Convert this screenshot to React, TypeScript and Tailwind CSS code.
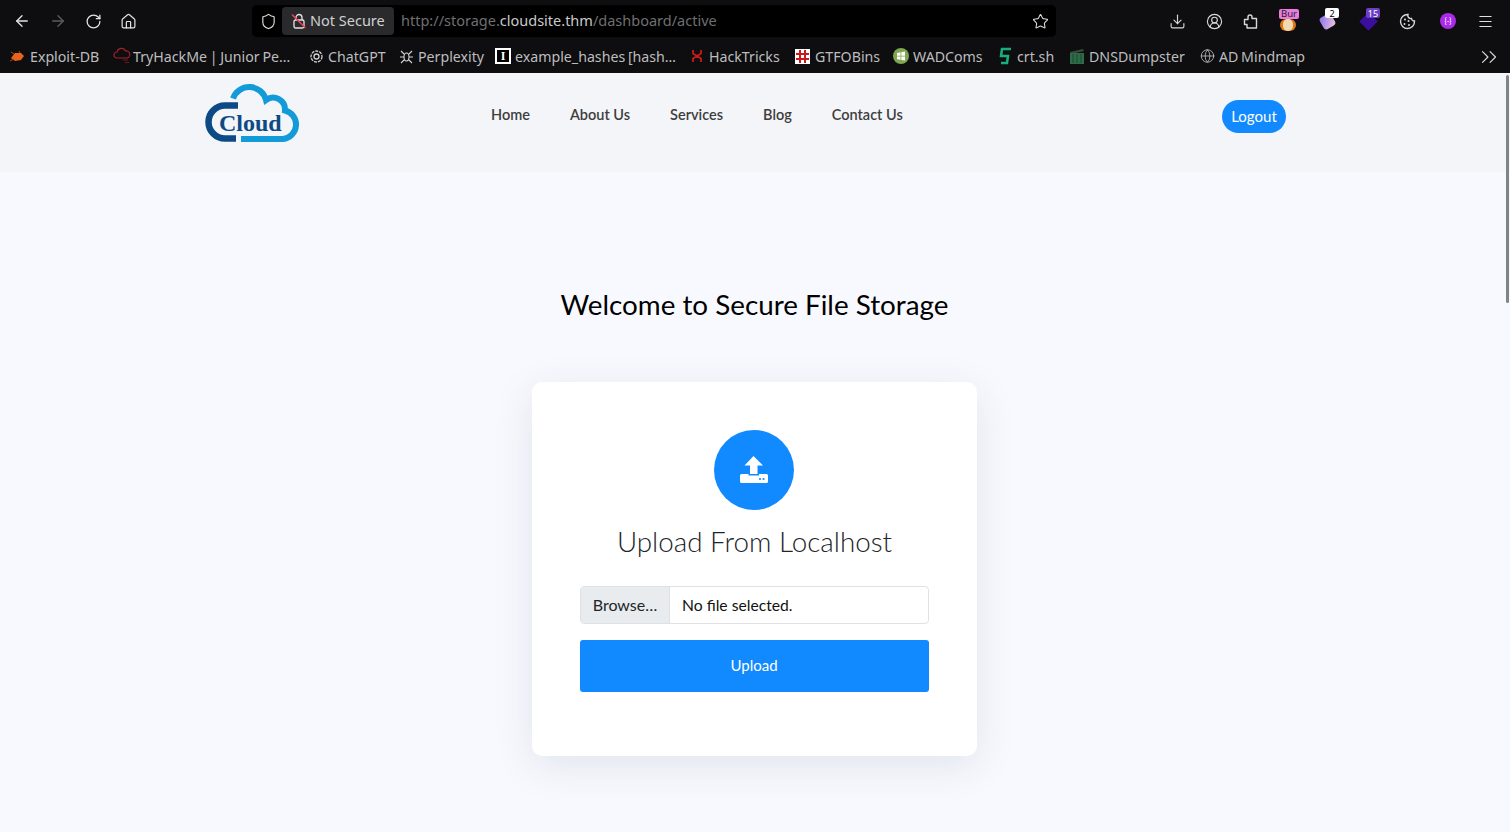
import {
  ArrowLeft,
  ArrowRight,
  ChevronsRight,
  CircleUserRound,
  Download,
  Globe,
  House,
  Menu,
  RotateCw,
  Shield,
  Star,
} from "lucide-react";

const links = ["Home", "About Us", "Services", "Blog", "Contact Us"];

const LockOff = () => (
  <svg width="16" height="16" viewBox="0 0 16 16" fill="none" stroke="#e5e5e5" strokeWidth="1.3">
    <path d="M5 7V4.500a3 3 0 0 1 6 0V7" />
    <rect x="3" y="7" width="10" height="8" rx="1.500" />
    <path d="M1 1.500 14.500 15" stroke="#f0405a" strokeWidth="1.500" />
  </svg>
);

const Bug = () => (
  <svg width="15" height="12" viewBox="0 0 15 12">
    <path d="M1 8 5 3l6 0 3 3-3 4-6 1z" fill="#e8641c" />
    <path d="M1 2l3 2M0 11l4-2M9 1l1 2" stroke="#a8481a" />
  </svg>
);

const CloudRed = () => (
  <svg width="18" height="18" viewBox="0 0 18 18" fill="none" stroke="#a3202a" strokeWidth="1.2">
    <path d="M4 11a3 3 0 0 1 0-6 4.500 4.500 0 0 1 8.500-1A3.500 3.500 0 0 1 14 11z" />
    <path d="M10 13h5M12 15.500h4" stroke="#6b1b20" />
  </svg>
);

const OpenAi = () => (
  <svg width="15" height="15" viewBox="0 0 15 15" fill="none" stroke="#d0d0d0" strokeWidth="1.300">
    <circle cx="7.500" cy="7.500" r="5.500" strokeDasharray="3 1" />
    <circle cx="7.500" cy="7.500" r="2.500" />
  </svg>
);

const Spider = () => (
  <svg width="15" height="15" viewBox="0 0 15 15" fill="none" stroke="#d4d4d4" strokeWidth="1.100">
    <ellipse cx="7.500" cy="8" rx="2.500" ry="4" />
    <path d="M5 5 2 2M10 5l3-3M5 8H1M10 8h4M5 11l-3 3M10 11l3 3" />
  </svg>
);

const Hashes = () => (
  <div className="flex h-[16px] w-[16px] items-center justify-center border-2 border-white bg-black font-['Liberation_Serif',serif] text-[12px] font-bold leading-none text-white">
    I
  </div>
);

const HackTricksIcon = () => (
  <svg width="14" height="14" viewBox="0 0 14 14" fill="none" stroke="#c81a1a" strokeWidth="1.800">
    <path d="M3 1v3.500l4 2.500 4-2.500V1M3 13V9.500L7 7l4 2.500V13" />
  </svg>
);

const GtfoBins = () => (
  <svg width="15" height="15" viewBox="0 0 15 15">
    <rect width="15" height="15" fill="#fff" />
    <path d="M5 1v13M10 1v13M1 5h13M1 10h13" stroke="#c81a1a" strokeWidth="2" />
  </svg>
);

const WadComs = () => (
  <svg width="16" height="16" viewBox="0 0 16 16">
    <circle cx="8" cy="8" r="8" fill="#7fa650" />
    <path d="M4 5l3.500-.7v3.400H4zM8.300 4.200 12 3.500v4.200H8.300zM4 8.500h3.500v3.300L4 11.200zM8.300 8.500H12v4l-3.700-.6z" fill="#fff" />
  </svg>
);

const CrtSh = () => (
  <svg width="14" height="18" viewBox="0 0 14 18" fill="none" stroke="#17b07c" strokeWidth="2.500">
    <path d="M13 2H4L3 9h7l-1 7H3" />
  </svg>
);

const Dumpster = () => (
  <svg width="16" height="16" viewBox="0 0 16 16">
    <path d="M1 4 14 1l1 2L2 6z" fill="#3a4a3c" />
    <rect x="1" y="5" width="14" height="11" fill="#2f6b48" />
    <path d="M4 6v9M8 6v9M12 6v9" stroke="#1f4a32" />
  </svg>
);

const PuzzleIcon = () => (
  <svg width="16" height="16" viewBox="0 0 16 16" fill="none" stroke="#d8d8d8" strokeWidth="1.400" strokeLinejoin="round">
    <path d="M1.500 6.500H5V4a2 2 0 0 1 4 0v1.500h4.500V15H4v-3.500H1.500z" />
  </svg>
);

const CookieIcon = () => (
  <svg width="17" height="17" viewBox="0 0 17 17" fill="none" stroke="#d8d8d8" strokeWidth="1.400">
    <path d="M9 1.500a7 7 0 1 0 6.500 6.500 3 3 0 0 1-3-2.500 3 3 0 0 1-3.500-4z" />
    <circle cx="6" cy="6.500" r="1" fill="#d8d8d8" stroke="none" />
    <circle cx="5.500" cy="11" r="1" fill="#d8d8d8" stroke="none" />
    <circle cx="10" cy="12" r="1" fill="#d8d8d8" stroke="none" />
    <circle cx="9.500" cy="8" r="1" fill="#d8d8d8" stroke="none" />
  </svg>
);

const bookmarks = [
  { name: "Exploit-DB", icon: <Bug />, iconBox: "w-[15px]", width: "w-[113px]", pl: "pl-[10px]", gap: "gap-[5px]" },
  { name: "TryHackMe | Junior Pe...", icon: <CloudRed />, iconBox: "w-[18px]", width: "w-[196px]", pl: "", gap: "gap-[2px]" },
  { name: "ChatGPT", icon: <OpenAi />, iconBox: "w-[15px]", width: "w-[90px]", pl: "", gap: "gap-[4px]" },
  { name: "Perplexity", icon: <Spider />, iconBox: "w-[15px]", width: "w-[96px]", pl: "", gap: "gap-[4px]" },
  { name: "example_hashes [hash...", icon: <Hashes />, iconBox: "w-[16px]", width: "w-[195px]", pl: "", gap: "gap-[4px]" },
  { name: "HackTricks", icon: <HackTricksIcon />, iconBox: "w-[14px]", width: "w-[105px]", pl: "", gap: "gap-[5px]" },
  { name: "GTFOBins", icon: <GtfoBins />, iconBox: "w-[15px]", width: "w-[98px]", pl: "", gap: "gap-[5px]" },
  { name: "WADComs", icon: <WadComs />, iconBox: "w-[16px]", width: "w-[105px]", pl: "", gap: "gap-[4px]" },
  { name: "crt.sh", icon: <CrtSh />, iconBox: "w-[14px]", width: "w-[71px]", pl: "", gap: "gap-[5px]" },
  { name: "DNSDumpster", icon: <Dumpster />, iconBox: "w-[16px]", width: "w-[131px]", pl: "", gap: "gap-[4px]" },
  { name: "AD Mindmap", icon: <Globe size={18} strokeWidth={1.200} color="#d0d0d0" />, iconBox: "w-[15px]", width: "w-[110px]", pl: "", gap: "gap-[4px]" },
];

const Badge = ({ text, className }: { text: string; className: string }) => (
  <div className={`absolute flex items-center justify-center rounded-[2px] font-['Noto_Sans',sans-serif] leading-none ${className}`}>
    {text}
  </div>
);

const Extensions = () => (
  <div className="ml-[21px] flex items-center">
    <div className="relative h-[12px] w-[16px] translate-y-[4px] rounded-full bg-[#d9761c]">
      <div className="mx-auto h-[12px] w-[10px] rounded-full bg-[#f3d9b0]" />
      <Badge text="Bur" className="left-[-1px] top-[-10px] h-[10px] w-[20px] bg-[#e87ce0] text-[9.500px] text-[#222]" />
    </div>
    <div className="relative ml-[23px] h-[16px] w-[16px]">
      <div className="mx-auto h-[13px] w-[13px] translate-y-[2px] rotate-[-30deg] rounded-[3px] bg-gradient-to-br from-[#8a6cf0] to-[#f3c6d8]" />
      <Badge text="2" className="left-[6px] top-[-5px] h-[10px] w-[14px] bg-white text-[9px] text-black" />
    </div>
    <div className="relative ml-[25px] h-[16px] w-[16px]">
      <div className="mx-auto h-[13px] w-[13px] translate-y-[2px] rotate-45 bg-[#3b0f9e]" />
      <Badge text="15" className="left-[6px] top-[-5px] h-[10px] w-[14px] bg-[#6b3fc4] text-[9px] text-white" />
    </div>
    <div className="ml-[23px]">
      <CookieIcon />
    </div>
    <div className="ml-[24px] flex h-[16px] w-[16px] items-center justify-center rounded-full bg-[#a92be8] text-[8px] leading-none text-white">
      {"{·}"}
    </div>
    <Menu size={17} strokeWidth={1.500} color="#e0e0e0" className="ml-[21px]" />
  </div>
);

const BrowserBar = () => (
  <div className="bg-[#0e0e10] text-[#cfcfd1]">
    <div className="flex h-[42px] items-center">
      <div className="flex items-center gap-[18px] pl-[13px]">
        <ArrowLeft size={18} strokeWidth={1.800} color="#e4e4e4" />
        <ArrowRight size={18} strokeWidth={1.800} color="#5c5c5e" />
        <RotateCw size={17} strokeWidth={1.800} color="#e4e4e4" />
        <House size={17} strokeWidth={1.700} color="#e4e4e4" />
      </div>
      <div className="ml-[115px] flex h-[32px] w-[804px] items-center rounded-[5px] bg-black pl-[8px] pr-[7px]">
        <Shield size={17} strokeWidth={1.600} color="#e0e0e0" />
        <div className="ml-[5px] flex h-[28px] w-[112px] items-center gap-[3px] rounded-[4px] bg-[#2a2a2d] pl-[9px] font-['Noto_Sans',sans-serif] text-[14.500px] text-[#d0d0d0]">
          <LockOff />
          Not Secure
        </div>
        <div className="ml-[7px] flex-1 font-['Noto_Sans',sans-serif] text-[14.500px] text-[#6f6f72]">
          http://storage.<span className="text-[#c9c9cb]">cloudsite.thm</span>/dashboard/active
        </div>
        <Star size={17} strokeWidth={1.500} color="#e0e0e0" />
      </div>
      <div className="ml-[113px] flex items-center">
        <Download size={17} strokeWidth={1.600} color="#d8d8d8" />
        <CircleUserRound size={17} strokeWidth={1.600} color="#d8d8d8" className="ml-[20px]" />
        <div className="ml-[20px]">
          <PuzzleIcon />
        </div>
        <Extensions />
      </div>
    </div>
    <div className="flex h-[31px] items-center pb-[2px] font-['Noto_Sans',sans-serif] text-[14.200px] text-[#bdbdbf] [word-spacing:-1px]">
      {bookmarks.map((b) => (
        <div key={b.name} className={`flex shrink-0 items-center ${b.width} ${b.pl} ${b.gap}`}>
          <span className={`flex shrink-0 justify-center ${b.iconBox}`}>{b.icon}</span>
          <span className="whitespace-nowrap">{b.name.replace("...", "…")}</span>
        </div>
      ))}
      <div className="ml-auto pr-[8px]">
        <ChevronsRight size={26} strokeWidth={1.100} color="#d8d8d8" />
      </div>
    </div>
  </div>
);

const Logo = () => (
  <svg width="96" height="62" viewBox="0 0 96 62" fill="none" strokeLinecap="butt">
    <path d="M33 22.500H20A16.500 16.500 0 0 0 20 55.500H31" stroke="#0d4a85" strokeWidth="6.500" />
    <path
      d="M36 56H78A14.500 14.500 0 0 0 80 27.500A12 12 0 0 0 61 17A17.300 17.300 0 0 0 28 15.500"
      stroke="#129bd8"
      strokeWidth="6"
    />
    <text x="14" y="48" fill="#0d4a85" fontFamily="'Liberation Serif', serif" fontSize="24" fontWeight="700">
      Cloud
    </text>
  </svg>
);

const Navbar = () => (
  <nav className="flex h-[99px] bg-[#f3f5f9] pl-[205px]">
    <div className="pt-[10px]">
      <Logo />
    </div>
    <ul className="ml-[190px] flex gap-[40px] pt-[31px] font-['Lato',sans-serif] text-[14.500px] font-semibold text-[#3d3d3d]">
      {links.map((l) => (
        <li key={l}>{l}</li>
      ))}
    </ul>
    <div className="ml-auto pr-[224px] pt-[27px]">
      <button className="flex h-[33px] w-[64px] items-center justify-center rounded-full bg-[#118aff] font-['Lato',sans-serif] text-[15px] text-white">
        Logout
      </button>
    </div>
  </nav>
);

const UploadGlyph = () => (
  <svg width="28" height="28" viewBox="0 0 28 28" fill="#fff">
    <path d="M13.500 0 23 9.500H17.500V18H10V9.500H4.500z" />
    <path d="M0 19.500a1.500 1.500 0 0 1 1.500-1.500H8.500v1.500H19V18h7.500a1.500 1.500 0 0 1 1.500 1.500v6a1.500 1.500 0 0 1-1.500 1.500H1.500A1.500 1.500 0 0 1 0 25.500z" />
    <circle cx="20" cy="23" r="1.100" fill="#118aff" />
    <circle cx="23.500" cy="23" r="1.100" fill="#118aff" />
  </svg>
);

const UploadCard = () => (
  <div className="mt-[58px] flex h-[374px] w-[445px] flex-col items-center rounded-[10px] bg-white px-[48px] pt-[48px] shadow-[0_10px_40px_rgba(30,50,90,0.1)]">
    <div className="mr-px flex h-[80px] w-[80px] items-center justify-center rounded-full bg-[#118aff]">
      <UploadGlyph />
    </div>
    <h2 className="mt-[14px] text-[27.800px] font-light leading-[36px] text-[#212529]">Upload From Localhost</h2>
    <div className="mt-[26px] flex h-[38px] w-full overflow-hidden rounded-[4px] border border-[#dee2e6] text-[15.700px]">
      <div className="flex w-[89px] items-center justify-center border-r border-[#dee2e6] bg-[#e9ecef] text-[16px] text-[#212529]">
        Browse…
      </div>
      <div className="flex flex-1 items-center pl-[12px] pt-px text-[#111]">No file selected.</div>
    </div>
    <button className="mt-[16px] h-[52px] w-full rounded-[3px] bg-[#118aff] pb-px pr-px text-[15px] text-white">Upload</button>
  </div>
);

export default function App() {
  return (
    <div className="relative h-[832px] overflow-hidden bg-[#f8f9fe] font-['Lato',sans-serif] [text-rendering:optimizeLegibility]">
      <BrowserBar />
      <Navbar />
      <main className="flex flex-col items-center pr-px">
        <h1 className="mt-[114px] text-[27.800px] font-normal leading-[38px] text-black">Welcome to Secure File Storage</h1>
        <UploadCard />
      </main>
      <div className="absolute right-[1px] top-[75px] h-[228px] w-[3px] rounded-full bg-[#808487]" />
    </div>
  );
}
